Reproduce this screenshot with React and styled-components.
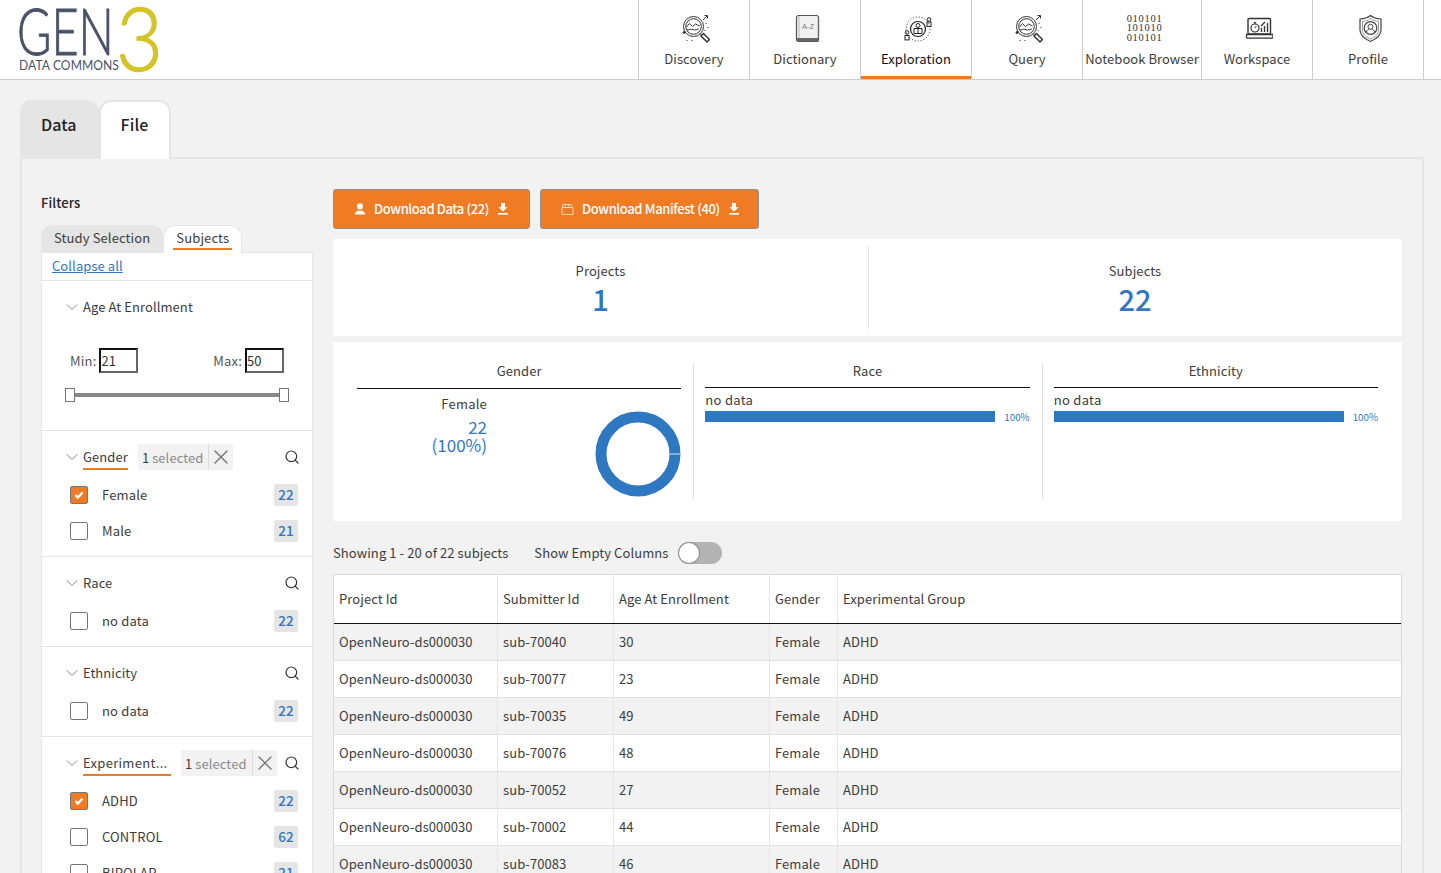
import React from "react";
import styled, { createGlobalStyle } from "styled-components";
import { ChevronDown, Search, X } from "lucide-react";

const GlobalStyle = createGlobalStyle`
  html, body {
    margin: 0;
    height: 100%;
    overflow: hidden;
    background: #f2f2f2;
    color: #3c3c3c;
    font-family: "Noto Sans CJK JP", "Noto Sans", sans-serif;
    font-size: 13px;
    letter-spacing: 0.08px;
  }
  * { box-sizing: border-box; }
`;

const Page = styled.div`
  height: 873px;
  overflow: hidden;
`;

/* top bar */
const TopBar = styled.header`
  display: flex;
  justify-content: space-between;
  height: 80px;
  background: #fff;
  border-bottom: 1px solid #ccc;
  padding-right: 17px;
`;
const LogoBox = styled.div`
  padding: 0 0 0 15px;
  svg { display: block; overflow: visible; }
`;
const Nav = styled.nav`
  display: flex;
`;
const NavItem = styled.a`
  position: relative;
  width: ${(p) => p.$w || 111}px;
  border-left: 1px solid #ccc;
  &:last-child { border-right: 1px solid #ccc; width: 112px; }
  display: flex;
  flex-direction: column;
  align-items: center;
  padding-top: 14px;
  line-height: 20px;
  letter-spacing: 0.05px;
  white-space: nowrap;
  color: ${(p) => (p.$active ? "#111" : "#3c3c3c")};
  ${(p) => p.$active && "box-shadow: inset 0 -3px 0 #ef7b24;"}
`;
const NavIcon = styled.div`
  height: 30px;
  width: 32px;
  margin-bottom: 5px;
  display: flex;
  justify-content: center;
  svg { display: block; }
`;
const BinaryIcon = styled.div`
  font-family: "Liberation Serif", serif;
  font-size: 10.5px;
  line-height: 9.300px;
  letter-spacing: 0.7px;
  height: 30px;
  margin-bottom: 5px;
  padding: 0 0 0 5px;
  text-align: center;
  color: #333;
`;

/* main tabs */
const Content = styled.main`
  padding: 20px 17px 0 20px;
`;
const MainTabs = styled.div`
  display: flex;
  height: 57px;
`;
const MainTab = styled.div`
  font-size: 16px;
  font-weight: 500;
  color: #222;
  line-height: 49px;
  padding: 0 22px 0 21px;
  border-radius: 12px 12px 0 0;
  height: 58px;
  background: ${(p) => (p.$active ? "#fff" : "#e5e5e5")};
  ${(p) => p.$active && "border: 2px solid #e5e5e5; border-bottom: 0; padding: 0 21px 0 20px; line-height: 45px; position: relative; z-index: 1; height: 59px;"}
`;
const Panel = styled.div`
  border: 2px solid #e5e5e5;
  display: flex;
  gap: 20px;
  padding: 30px 20px 0 19px;
  height: 800px;
`;

/* filters */
const Sidebar = styled.aside`
  width: 272px;
  flex: none;
`;
const FilterHeading = styled.div`
  font-weight: 500;
  color: #222;
  line-height: 28px;
  margin-bottom: 8px;
`;
const FilterTabs = styled.div`
  display: flex;
  height: 28px;
  letter-spacing: 0.12px;
`;
const FilterTab = styled.div`
  padding: 0 13px;
  line-height: 26px;
  border-radius: 12px 12px 0 0;
  background: ${(p) => (p.$active ? "#fff" : "#e5e5e5")};
  ${(p) => p.$active && "border: 1px solid #e5e5e5; border-bottom: 0; padding: 0 9px; line-height: 24px; z-index: 1;"}
`;
const TabLabel = styled.span`
  display: inline-block;
  line-height: 20px;
  padding: 0 3px;
  border-bottom: 2px solid #ef7b24;
`;
const FilterBody = styled.div`
  background: #fff;
  border: 1px solid #e5e5e5;
  border-top: 0;
  margin-top: -1px;
`;
const CollapseRow = styled.div`
  height: 29px;
  padding-left: 10px;
  line-height: 26px;
  border-top: 1px solid #e5e5e5;
  border-bottom: 1px solid #e5e5e5;
`;
const LinkText = styled.a`
  color: #2f77c4;
  text-decoration: underline;
`;
const Section = styled.section`
  padding: 13px 14px 7px 26px;
  border-bottom: 1px solid #e5e5e5;
  &:last-child { border-bottom: 0; }
`;
const AgeSection = styled(Section)`
  height: 150px;
`;
const SectionHead = styled.div`
  display: flex;
  align-items: center;
  height: 26px;
  margin-bottom: 7px;
  color: #3c3c3c;
`;
const Chevron = styled(ChevronDown)`
  flex: none;
  margin: 0 1px 0 -6px;
  color: #666;
`;
const SectionTitle = styled.span`
  display: block;
  flex: ${(p) => (p.$wide ? "0 0 88px" : "none")};
  white-space: nowrap;
  line-height: 22px;
  ${(p) => p.$wide && "letter-spacing: 0.3px;"}
  ${(p) => p.$marked && "border-bottom: 2px solid #ef7b24; margin-top: 2px;"}
`;
const SelectedPill = styled.div`
  display: flex;
  align-items: center;
  height: 26px;
  margin-left: 10px;
  background: #f2f2f2;
  color: #8a8a8a;
  padding-left: 4px;
  white-space: nowrap;
  b { color: #3c3c3c; font-weight: 400; margin-right: 3px; }
`;
const PillClear = styled.span`
  display: flex;
  align-items: center;
  justify-content: center;
  margin-left: 5px;
  width: 25px;
  height: 26px;
  border-left: 1px solid #dcdcdc;
  color: #777;
`;
const SearchIcon = styled(Search)`
  margin: 0 -2px 0 auto;
  color: #333;
  flex: none;
`;
const OptionRow = styled.div`
  display: flex;
  align-items: center;
  height: 36px;
  padding-left: 2px;
  letter-spacing: 0.15px;
`;
const OptionName = styled.span`
  margin-top: -2px;
`;
const Checkbox = styled.span`
  flex: none;
  width: 18px;
  height: 18px;
  margin-right: 14px;
  border-radius: 2px;
  border: 1px solid #777;
  background: ${(p) => (p.$on ? "#ef7b24" : "#fff")};
  display: flex;
  align-items: center;
  justify-content: center;
`;
const CountBadge = styled.span`
  margin-left: auto;
  width: 24px;
  height: 22px;
  line-height: 21px;
  text-align: center;
  border-radius: 2px;
  background: #e5e5e5;
  color: #2f77c4;
  font-weight: 500;
  font-size: 13.5px;
  letter-spacing: 0;
`;
const RangeRow = styled.div`
  display: flex;
  justify-content: space-between;
  margin-top: 28px;
  padding: 0 14px 0 2px;
`;
const RangeField = styled.label`
  display: flex;
  align-items: center;
  gap: 3px;
  color: #555;
  letter-spacing: 0.2px;
`;
const RangeInput = styled.input`
  width: 39px;
  height: 25px;
  padding: 0;
  font: inherit;
  font-size: 13px;
  color: #333;
  background: #fff;
  border: 2px solid;
  border-color: #111 #666 #666 #111;
`;
const SliderTrack = styled.div`
  position: relative;
  height: 4px;
  margin: 20px 14px 0 2px;
  background: #888;
`;
const SliderHandle = styled.span`
  position: absolute;
  top: -5px;
  ${(p) => (p.$end ? "right: -5px;" : "left: -5px;")}
  width: 10px;
  height: 14px;
  background: #fff;
  border: 1px solid #777;
`;

/* right column */
const Results = styled.div`
  flex: 1;
  min-width: 0;
`;
const ButtonRow = styled.div`
  display: flex;
  gap: 10px;
  margin-bottom: 10px;
`;
const DownloadButton = styled.button`
  display: flex;
  align-items: center;
  height: 40px;
  padding: 0 20px;
  &:last-child { padding-right: 18px; }
  background: #ef7b24;
  border: 1px solid #8f8f8f;
  border-radius: 3px;
  font: inherit;
  font-weight: 500;
  letter-spacing: -0.38px;
  color: #fff;
  svg { display: block; flex: none; }
  span { margin: -2px 8px 0; }
`;
const StatsCard = styled.div`
  display: flex;
  height: 97px;
  padding: 7px 0;
  background: #fff;
`;
const Stat = styled.div`
  flex: 1;
  text-align: center;
  padding: 15px 1px 0 0;
  line-height: 20px;
  &:first-child { flex: 0 0 535px; padding-right: 0; }
  & + & { border-left: 1px solid #e5e5e5; }
`;
const StatValue = styled.div`
  margin-top: 2px;
  font-size: 29px;
  line-height: 30px;
  font-weight: 500;
  color: #2f77c4;
`;
const ChartsCard = styled.div`
  display: flex;
  height: 179px;
  margin-top: 6px;
  padding: 22px 24px 0;
  background: #fff;
`;
const ChartCol = styled.div`
  flex: 1;
  height: 135px;
  & + & {
    border-left: 1px solid #e0e0e0;
    margin-left: 12px;
    padding-left: 11px;
  }
`;
const ChartTitle = styled.div`
  text-align: center;
  line-height: 13px;
  height: ${(p) => (p.$tall ? 25 : 24)}px;
  border-bottom: 1px solid #111;
`;
const DonutRow = styled.div`
  display: flex;
  justify-content: space-between;
  padding: 5px 0 0 0;
`;
const DonutText = styled.div`
  width: 130px;
  text-align: right;
  letter-spacing: 0.2px;
`;
const DonutLabel = styled.div`
  line-height: 20px;
`;
const DonutValue = styled.div`
  margin-top: 4px;
  font-size: 17px;
  line-height: 18px;
  color: #2f77c4;
  letter-spacing: 0;
`;
const DonutChart = styled.svg`
  margin-top: 17px;
  display: block;
`;
const BarLabel = styled.div`
  line-height: 18px;
  margin-top: 3px;
  letter-spacing: 0.3px;
`;
const BarRow = styled.div`
  display: flex;
  align-items: center;
  justify-content: space-between;
`;
const BarFill = styled.div`
  width: 290px;
  height: 11px;
  background: #2e78c1;
`;
const BarPercent = styled.span`
  font-size: 9.8px;
  line-height: 11px;
  padding-top: 3px;
  color: #2f77c4;
  letter-spacing: 0;
`;
const TableTools = styled.div`
  display: flex;
  align-items: center;
  height: 22px;
  margin: 21px 0 10px;
`;
const ToolText = styled.span`
  margin: -2px 0 0 ${(p) => p.$gap || 0}px;
`;
const Toggle = styled.span`
  position: relative;
  width: 44px;
  height: 22px;
  margin-left: 10px;
  border-radius: 11px;
  background: #b3b3b3;
`;
const ToggleKnob = styled.span`
  position: absolute;
  left: 1px;
  top: 1px;
  width: 20px;
  height: 20px;
  border-radius: 50%;
  background: #fff;
  box-shadow: 0 0 0 1px #8f8f8f;
`;
const DataTable = styled.div`
  border: 1px solid #d8d8d8;
  border-bottom: 0;
`;
const TableRow = styled.div`
  display: grid;
  grid-template-columns: 163px 116px 156px 68px 1fr;
  height: 37px;
  background: ${(p) => (p.$odd ? "#f2f2f2" : "#fff")};
  border-bottom: 1px solid #e0e0e0;
`;
const HeadRow = styled(TableRow)`
  height: 49px;
  background: #fff;
  border-bottom: 1px solid #111;
`;
const Cell = styled.div`
  padding: 0 0 2px 5px;
  display: flex;
  align-items: center;
  & + & { border-left: 1px solid #e5e5e5; }
`;

/* drawn icons */
const Check = () => (
  <svg width="12" height="10" viewBox="0 0 12 10">
    <path d="M2.500 5.200l2.300 2.300L9.500 2.500" fill="none" stroke="#fff" strokeWidth="2.400" />
  </svg>
);

const UserIcon = () => (
  <svg width="12" height="12" viewBox="0 0 12 12" fill="#fff">
    <ellipse cx="6" cy="3.400" rx="2.900" ry="3.200" />
    <path d="M1 11.400c0-2 1.400-2.900 3.400-3.600h3.200c2 .7 3.400 1.600 3.400 3.600z" />
  </svg>
);

const ManifestIcon = () => (
  <svg width="13" height="13" viewBox="0 0 13 13" fill="none" stroke="#fbd9bd" strokeWidth="1">
    <path d="M2 1.500h8l2 3v7H1v-7z" />
    <path d="M1 4.500h10M4.500 1.500v2M7.500 1.500v2" />
  </svg>
);

const DownloadIcon = () => (
  <svg width="12" height="12" viewBox="0 0 12 12" fill="#fff">
    <path d="M4 0h4v4.200h2.600L6 8.600 1.400 4.200H4z" />
    <rect x="1" y="10" width="10" height="1.600" />
  </svg>
);

const DiscoveryIcon = () => (
  <svg width="32" height="30" viewBox="0 0 32 30" fill="none" stroke="#333" strokeWidth="1">
    <circle cx="15.500" cy="12.500" r="10" />
    <circle cx="15.500" cy="12.500" r="7.800" />
    <path d="M8.500 13l3-3.500 3 3 3-2.500 4 2" />
    <path d="M8.800 15.500c2 1 3-.6 5-.2s3 1.400 7-.4" />
    <path d="M22 19.500l1.500 1.500" />
    <path d="M23 22l2.500-2.500 6 6-2.500 2.500z" strokeWidth="1.500" />
    <path d="M25 6l4-4M26.500 1.500h3v3" />
    <circle cx="6" cy="18.500" r="1" fill="#333" />
    <path d="M28 9v1M30 13v1M27 16v1M9 26v1M14 26v1" />
  </svg>
);

const DictionaryIcon = () => (
  <svg width="30" height="30" viewBox="0 0 30 30" fill="none">
    <rect x="6.500" y="1.500" width="22" height="26" rx="2" fill="#f1f1f1" stroke="#555" strokeWidth="1.200" />
    <rect x="7" y="24" width="21" height="3.200" fill="#666" />
    <path d="M9 2v22" stroke="#bbb" />
    <path d="M28.500 4v18" stroke="#777" strokeWidth="1.400" strokeDasharray="1.400 1.600" />
    <text x="18" y="14.500" fontFamily="Liberation Sans, sans-serif" fontSize="7.500" fill="#777" textAnchor="middle">A-Z</text>
  </svg>
);

const ExplorationIcon = () => (
  <svg width="32" height="30" viewBox="0 0 32 30" fill="none" stroke="#222" strokeWidth="1">
    <circle cx="18" cy="15" r="12" strokeDasharray="1 2" />
    <circle cx="18" cy="15" r="7.500" strokeWidth="1.200" />
    <circle cx="18" cy="11.500" r="2" />
    <path d="M14 19.500v-5h8v5zM18 14.500v5" />
    <circle cx="29" cy="5.500" r="1.800" />
    <rect x="27" y="8" width="4" height="4.400" />
    <circle cx="7" cy="18.500" r="1.800" />
    <rect x="5" y="21.500" width="4" height="4.400" />
  </svg>
);

const WorkspaceIcon = () => (
  <svg width="32" height="30" viewBox="0 0 32 30" fill="none" stroke="#333" strokeWidth="1">
    <rect x="7" y="4.500" width="22.500" height="15.500" rx="1" strokeWidth="1.400" />
    <circle cx="14" cy="14" r="4" strokeWidth="1.200" />
    <path d="M14 10V8.400M12.800 8.400h2.400M14 14l1.400-2" />
    <path d="M20.500 18v-4M23.500 18v-6M26.500 18V9M20 12l4-4" strokeWidth="1.300" />
    <path d="M5.500 20.500h26.500v2.500a1.200 1.200 0 0 1-1.200 1.200H6.700a1.200 1.200 0 0 1-1.200-1.200z" strokeWidth="1.300" />
  </svg>
);

const ProfileIcon = () => (
  <svg width="30" height="30" viewBox="0 0 30 30" fill="none" stroke="#444" strokeWidth="1">
    <path d="M17.500 1.500c3 2.400 6 3.300 10.500 3.500v11c0 5-4 8.500-10.500 11.500C11 24.500 7 21 7 16V5c4.500-.2 7.500-1.100 10.500-3.500z" strokeWidth="1.200" />
    <path d="M17.500 4.500c2.500 1.800 5 2.600 8 2.800v8.700c0 4-3 6.800-8 9.200-5-2.400-8-5.200-8-9.200V7.300c3-.2 5.500-1 8-2.800z" stroke="#999" />
    <circle cx="17.500" cy="14" r="6.300" strokeWidth="1.200" />
    <circle cx="17.500" cy="12.800" r="2.500" />
    <path d="M13.300 18c.8-2 2-2.600 3-2.800M21.700 18c-.8-2-2-2.600-3-2.800" />
  </svg>
);

const LogoText = styled.text`
  font-family: "Lato", "Open Sans", sans-serif;
`;

const Logo = () => (
  <svg width="150" height="79" viewBox="0 0 150 79">
    <LogoText x="2" y="55" fontSize="65" fontWeight="300" fill="#4a5268" stroke="#4a5268" strokeWidth="0.9" textLength="97" lengthAdjust="spacingAndGlyphs">GEN</LogoText>
    <LogoText x="4" y="69.500" fontSize="12.500" fontWeight="400" fill="#4a5268" textLength="100" lengthAdjust="spacingAndGlyphs">DATA COMMONS</LogoText>
    <LogoText x="101" y="71" fontSize="89" fontWeight="300" fill="#d4c429" stroke="#d4c429" strokeWidth="1.500" textLength="47" lengthAdjust="spacingAndGlyphs">3</LogoText>
  </svg>
);

const navItems = [
  { label: "Discovery", icon: <DiscoveryIcon /> },
  { label: "Dictionary", icon: <DictionaryIcon /> },
  { label: "Exploration", icon: <ExplorationIcon />, active: true },
  { label: "Query", icon: <DiscoveryIcon /> },
  { label: "Notebook Browser", w: 119, binary: true },
  { label: "Workspace", icon: <WorkspaceIcon /> },
  { label: "Profile", icon: <ProfileIcon /> },
];

const filterSections = [
  { title: "Gender", selected: true, options: [["Female", 22, true], ["Male", 21]] },
  { title: "Race", options: [["no data", 22]] },
  { title: "Ethnicity", options: [["no data", 22]] },
  {
    title: "Experiment...",
    wide: true,
    selected: true,
    options: [["ADHD", 22, true], ["CONTROL", 62], ["BIPOLAR", 21]],
  },
];

const rows = [
  ["sub-70040", 30],
  ["sub-70077", 23],
  ["sub-70035", 49],
  ["sub-70076", 48],
  ["sub-70052", 27],
  ["sub-70002", 44],
  ["sub-70083", 46],
];

function FilterSection({ title, wide, selected, options }) {
  return (
    <Section>
      <SectionHead>
        <Chevron size={20} strokeWidth={0.9} />
        <SectionTitle $wide={wide} $marked={selected}>{title}</SectionTitle>
        {selected && (
          <SelectedPill>
            <b>1</b>selected
            <PillClear><X size={24} strokeWidth={1.4} /></PillClear>
          </SelectedPill>
        )}
        <SearchIcon size={16} strokeWidth={1.8} />
      </SectionHead>
      {options.map(([name, count, on]) => (
        <OptionRow key={name}>
          <Checkbox $on={on}>{on && <Check />}</Checkbox>
          <OptionName>{name}</OptionName>
          <CountBadge>{count}</CountBadge>
        </OptionRow>
      ))}
    </Section>
  );
}

function BarChart({ title }) {
  return (
    <ChartCol>
      <ChartTitle>{title}</ChartTitle>
      <BarLabel>no data</BarLabel>
      <BarRow>
        <BarFill />
        <BarPercent>100%</BarPercent>
      </BarRow>
    </ChartCol>
  );
}

export default function App() {
  return (
    <Page>
      <GlobalStyle />
      <TopBar>
        <LogoBox><Logo /></LogoBox>
        <Nav>
          {navItems.map((item) => (
            <NavItem key={item.label} $w={item.w} $active={item.active}>
              {item.binary ? (
                <BinaryIcon>010101<br />101010<br />010101</BinaryIcon>
              ) : (
                <NavIcon>{item.icon}</NavIcon>
              )}
              {item.label}
            </NavItem>
          ))}
        </Nav>
      </TopBar>

      <Content>
        <MainTabs>
          <MainTab>Data</MainTab>
          <MainTab $active>File</MainTab>
        </MainTabs>
        <Panel>
          <Sidebar>
            <FilterHeading>Filters</FilterHeading>
            <FilterTabs>
              <FilterTab>Study Selection</FilterTab>
              <FilterTab $active><TabLabel>Subjects</TabLabel></FilterTab>
            </FilterTabs>
            <FilterBody>
              <CollapseRow><LinkText>Collapse all</LinkText></CollapseRow>
              <AgeSection>
                <SectionHead>
                  <Chevron size={20} strokeWidth={0.9} />
                  <SectionTitle>Age At Enrollment</SectionTitle>
                </SectionHead>
                <RangeRow>
                  <RangeField>Min: <RangeInput defaultValue="21" /></RangeField>
                  <RangeField>Max: <RangeInput defaultValue="50" /></RangeField>
                </RangeRow>
                <SliderTrack>
                  <SliderHandle />
                  <SliderHandle $end />
                </SliderTrack>
              </AgeSection>
              {filterSections.map((s) => (
                <FilterSection key={s.title} {...s} />
              ))}
            </FilterBody>
          </Sidebar>

          <Results>
            <ButtonRow>
              <DownloadButton><UserIcon /><span>Download Data (22)</span><DownloadIcon /></DownloadButton>
              <DownloadButton><ManifestIcon /><span>Download Manifest (40)</span><DownloadIcon /></DownloadButton>
            </ButtonRow>
            <StatsCard>
              <Stat>Projects<StatValue>1</StatValue></Stat>
              <Stat>Subjects<StatValue>22</StatValue></Stat>
            </StatsCard>
            <ChartsCard>
              <ChartCol>
                <ChartTitle $tall>Gender</ChartTitle>
                <DonutRow>
                  <DonutText>
                    <DonutLabel>Female</DonutLabel>
                    <DonutValue>22<br />(100%)</DonutValue>
                  </DonutText>
                  <DonutChart width="86" height="86" viewBox="0 0 86 86">
                    <circle cx="43" cy="43" r="37" fill="none" stroke="#2e78c1" strokeWidth="11" />
                    <rect x="75" y="42.500" width="11" height="1" fill="#d5e4f2" />
                  </DonutChart>
                </DonutRow>
              </ChartCol>
              <BarChart title="Race" />
              <BarChart title="Ethnicity" />
            </ChartsCard>
            <TableTools>
              <ToolText>Showing 1 - 20 of 22 subjects</ToolText>
              <ToolText $gap={26}>Show Empty Columns</ToolText>
              <Toggle><ToggleKnob /></Toggle>
            </TableTools>
            <DataTable>
              <HeadRow>
                <Cell>Project Id</Cell>
                <Cell>Submitter Id</Cell>
                <Cell>Age At Enrollment</Cell>
                <Cell>Gender</Cell>
                <Cell>Experimental Group</Cell>
              </HeadRow>
              {rows.map(([id, age], i) => (
                <TableRow key={id} $odd={i % 2 === 0}>
                  <Cell>OpenNeuro-ds000030</Cell>
                  <Cell>{id}</Cell>
                  <Cell>{age}</Cell>
                  <Cell>Female</Cell>
                  <Cell>ADHD</Cell>
                </TableRow>
              ))}
            </DataTable>
          </Results>
        </Panel>
      </Content>
    </Page>
  );
}
